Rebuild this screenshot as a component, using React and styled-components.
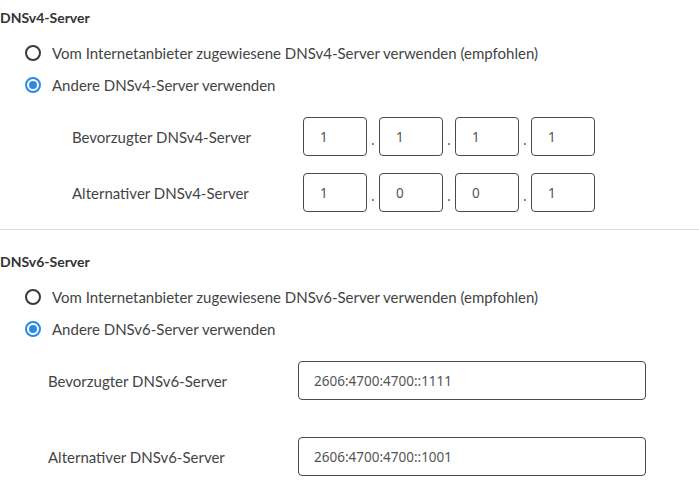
import React from "react";
import styled, { createGlobalStyle } from "styled-components";

const Global = createGlobalStyle`
  html, body { margin: 0; padding: 0; background: #fff; }
  body { font-family: Lato, "Noto Sans", sans-serif; color: #444; }
  * { box-sizing: border-box; }
`;

const Page = styled.div`
  width: 699px;
  padding-top: 8px;
`;

const Section = styled.section`
  display: flex;
  flex-direction: column;
`;

const Heading = styled.h3`
  margin: 0;
  font-size: 14px;
  line-height: 20px;
  font-weight: 700;
  color: #333;
`;

const RadioList = styled.div`
  display: flex;
  flex-direction: column;
  padding-left: 25px;
  margin-top: 9px;
`;

const RadioRow = styled.label`
  display: flex;
  align-items: center;
  gap: 11px;
  height: 32px;
  font-size: 15px;
  color: #444;
`;

const Circle = styled.span`
  width: 16px;
  height: 16px;
  border-radius: 50%;
  border: 2px solid ${(p) => (p.$checked ? "#2a8ae4" : "#3a3a3a")};
  display: flex;
  align-items: center;
  justify-content: center;
  flex-shrink: 0;
  &::after {
    content: "";
    width: 8px;
    height: 8px;
    border-radius: 50%;
    background: ${(p) => (p.$checked ? "#2a8ae4" : "transparent")};
  }
`;

const Fields = styled.div`
  display: flex;
  flex-direction: column;
  gap: ${(p) => p.$gap}px;
  margin-top: 16px;
`;

const FieldRow = styled.div`
  display: flex;
  align-items: center;
  padding-left: ${(p) => p.$indent}px;
`;

const Label = styled.span`
  width: ${(p) => p.$width}px;
  font-size: 15px;
  color: #444;
  flex-shrink: 0;
`;

const Octets = styled.div`
  display: flex;
  align-items: center;
`;

const Input = styled.input`
  width: ${(p) => p.$width}px;
  height: 39px;
  border: 1px solid #4a4a4a;
  border-radius: 4px;
  padding: 0 0 0 ${(p) => p.$pad}px;
  font-family: "Noto Sans", sans-serif;
  font-size: 13.5px;
  color: #555;
  background: #fff;
  outline: none;
`;

const Dot = styled.span`
  width: 12px;
  text-align: center;
  font-family: "Noto Sans", sans-serif;
  font-size: 14px;
  color: #555;
  padding-top: 5px;
`;

const Separator = styled.hr`
  border: 0;
  height: 1px;
  background: #dcdcdc;
  margin: 17px 0 22px;
  width: 100%;
`;

function Radio({ checked, children }) {
  return (
    <RadioRow>
      <Circle $checked={checked} />
      <span>{children}</span>
    </RadioRow>
  );
}

function V4Row({ label, values }) {
  return (
    <FieldRow $indent={72}>
      <Label $width={231}>{label}</Label>
      <Octets>
        {values.map((v, i) => (
          <React.Fragment key={i}>
            {i > 0 && <Dot>.</Dot>}
            <Input $width={64} $pad={16} defaultValue={v} readOnly />
          </React.Fragment>
        ))}
      </Octets>
    </FieldRow>
  );
}

function V6Row({ label, value }) {
  return (
    <FieldRow $indent={48}>
      <Label $width={250}>{label}</Label>
      <Input $width={348} $pad={15} defaultValue={value} readOnly />
    </FieldRow>
  );
}

export default function App() {
  return (
    <>
      <Global />
      <Page>
        <Section>
          <Heading>DNSv4-Server</Heading>
          <RadioList>
            <Radio>Vom Internetanbieter zugewiesene DNSv4-Server verwenden (empfohlen)</Radio>
            <Radio checked>Andere DNSv4-Server verwenden</Radio>
          </RadioList>
          <Fields $gap={17}>
            <V4Row label="Bevorzugter DNSv4-Server" values={["1", "1", "1", "1"]} />
            <V4Row label="Alternativer DNSv4-Server" values={["1", "0", "0", "1"]} />
          </Fields>
        </Section>
        <Separator />
        <Section>
          <Heading>DNSv6-Server</Heading>
          <RadioList>
            <Radio>Vom Internetanbieter zugewiesene DNSv6-Server verwenden (empfohlen)</Radio>
            <Radio checked>Andere DNSv6-Server verwenden</Radio>
          </RadioList>
          <Fields $gap={37}>
            <V6Row label="Bevorzugter DNSv6-Server" value="2606:4700:4700::1111" />
            <V6Row label="Alternativer DNSv6-Server" value="2606:4700:4700::1001" />
          </Fields>
        </Section>
      </Page>
    </>
  );
}
